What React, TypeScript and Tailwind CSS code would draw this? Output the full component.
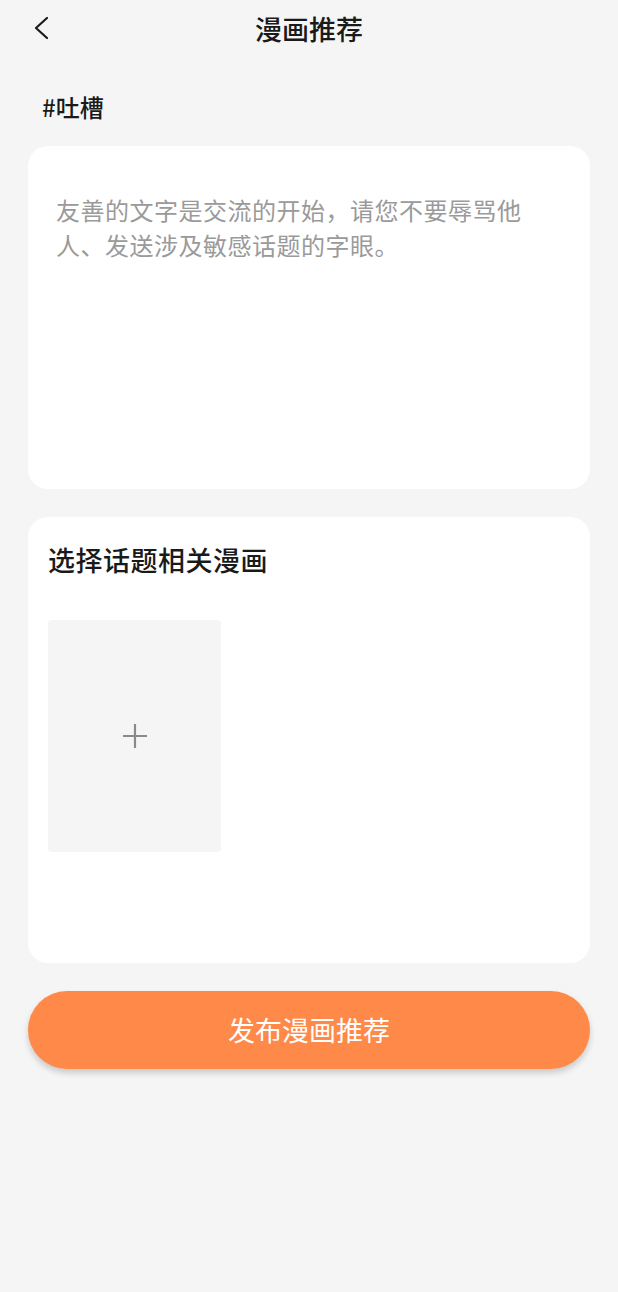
import React from 'react';

export default function App() {
  return (
    <div
      className="min-h-[1292px] w-full bg-[#f5f5f5] text-[#1a1a1a]"
      style={{ fontFamily: '"Noto Sans CJK SC", "Noto Sans", sans-serif' }}
    >
      {/* 顶部标题栏 */}
      <header className="relative flex h-[56px] items-center justify-center">
        <button type="button" className="absolute left-[33px] top-[16px] p-0">
          <svg width="16" height="24" viewBox="0 0 16 24" fill="none">
            <path d="M14 2 L3 12 L14 22" stroke="#1a1a1a" strokeWidth="2.2" strokeLinecap="round" strokeLinejoin="round" />
          </svg>
        </button>
        <h1 className="text-[27px] font-medium leading-none">漫画推荐</h1>
      </header>

      <div className="px-[28px]">
        <div className="pl-[14px] pt-[39px] text-[24px] font-medium leading-none">#吐槽</div>

        <div className="mt-[27px] h-[343px] rounded-[20px] bg-white px-[28px] pt-[46px]">
          <p className="w-[475px] text-[24px] leading-[35px] tracking-[0.5px] text-[#9a9a9a]">
            友善的文字是交流的开始，请您不要辱骂他人、发送涉及敏感话题的字眼。
          </p>
        </div>

        <div className="mt-[28px] h-[446px] rounded-[20px] bg-white px-[20px] pt-[28px]">
          <h2 className="text-[27px] font-medium leading-[30px] tracking-[0.5px]">选择话题相关漫画</h2>
          <button
            type="button"
            className="mt-[45px] flex h-[232px] w-[173px] items-center justify-center rounded-[4px] bg-[#f5f5f5]"
          >
            <svg width="26" height="26" viewBox="0 0 26 26" fill="none">
              <path d="M13 1 V25 M1 13 H25" stroke="#8a8a8a" strokeWidth="2.2" />
            </svg>
          </button>
        </div>

        <button
          type="button"
          className="mt-[28px] flex h-[78px] w-full items-center justify-center rounded-full bg-[#ff8948] text-[27px] font-normal text-white shadow-[0_4px_6px_rgba(0,0,0,0.18)]"
        >
          发布漫画推荐
        </button>
      </div>
    </div>
  );
}
